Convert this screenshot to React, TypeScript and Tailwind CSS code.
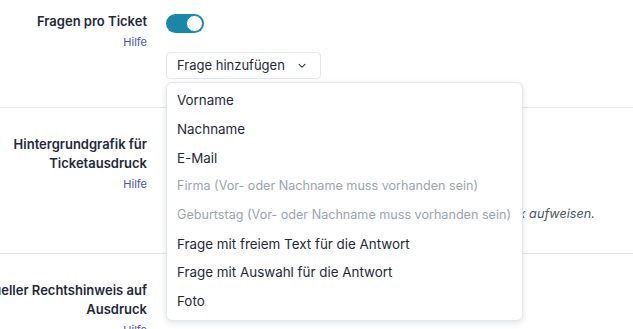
import React from 'react';

const font = { fontFamily: 'Inter, "Noto Sans", sans-serif' };

const Hilfe = () => (
  <div className="mt-[2px] text-[11px] leading-[18px] text-[#4a4fc0]">Hilfe</div>
);

const menuItems = [
  { label: 'Vorname', disabled: false },
  { label: 'Nachname', disabled: false },
  { label: 'E-Mail', disabled: false },
  { label: 'Firma (Vor- oder Nachname muss vorhanden sein)', disabled: true },
  { label: 'Geburtstag (Vor- oder Nachname muss vorhanden sein)', disabled: true },
  { label: 'Frage mit freiem Text für die Antwort', disabled: false },
  { label: 'Frage mit Auswahl für die Antwort', disabled: false },
  { label: 'Foto', disabled: false },
];

export default function App() {
  return (
    <div className="w-[633px] h-[329px] overflow-hidden bg-white text-[13px] text-[#1f2937]" style={font}>
      <div className="ml-[-59px]">
        {/* Fragen pro Ticket */}
        <div className="grid grid-cols-[206px_1fr] gap-x-[19px] pt-3 pb-[28px] border-b border-[#e5e7eb]">
          <div className="text-right">
            <div className="font-semibold leading-[19px] text-[#1e293b]">Fragen pro Ticket</div>
            <Hilfe />
          </div>
          <div className="relative">
            <div className="mt-[2px] w-[38px] h-[19px] rounded-full bg-[#1a87a9] flex items-center justify-end px-[1px]">
              <div className="w-[17px] h-[17px] rounded-full bg-white border border-[#1a87a9]" />
            </div>
            <button className="mt-[19px] h-[27px] pl-[10px] pr-[13px] flex items-center gap-[12px] border border-[#e2e8f0] rounded-[4px] bg-white text-[13px] text-[#1f2937]">
              <span>Frage hinzufügen</span>
              <svg width="10" height="10" viewBox="0 0 24 24" fill="none" stroke="#1f2937" strokeWidth="2.5" strokeLinecap="round" strokeLinejoin="round">
                <path d="M5 8l7 7 7-7" />
              </svg>
            </button>
            <div className="absolute left-0 top-[70px] z-10 w-[357px] rounded-[6px] border border-[#e2e8f0] bg-white shadow-[0_2px_6px_rgba(15,23,42,0.12)] pt-[3px] pb-[4px]">
              {menuItems.map((item) => (
                <div
                  key={item.label}
                  className={`h-[28.7px] flex items-center px-[10px] whitespace-nowrap ${item.disabled ? 'text-[12.6px] text-[#9ca3af]' : 'text-[13.4px] text-[#1f2937]'}`}
                >
                  {item.label}
                </div>
              ))}
            </div>
          </div>
        </div>

        {/* Hintergrundgrafik */}
        <div className="grid grid-cols-[206px_1fr] gap-x-[19px] pt-[27px] pb-[29px] border-b border-[#e5e7eb]">
          <div className="text-right">
            <div className="font-semibold leading-[19px] text-[#1e293b] pl-[60px]">Hintergrundgrafik für Ticketausdruck</div>
            <Hilfe />
          </div>
          <div>
            <div className="h-[60px] flex items-start">
              <button className="h-[26px] px-3 border border-[#e2e8f0] rounded-[4px]">Datei auswählen</button>
            </div>
            <div className="mt-[9px] leading-5 text-[12.7px] italic text-[#4b5563] whitespace-nowrap">
              Die Hintergrundgrafik sollte eine Größe von 2480 x 3508 px aufweisen.
            </div>
          </div>
        </div>

        {/* Rechtshinweis */}
        <div className="grid grid-cols-[206px_1fr] gap-x-[19px] pt-[27px]">
          <div className="text-right">
            <div className="font-semibold leading-[19px] text-[#1e293b]">Individueller Rechtshinweis auf Ausdruck</div>
            <Hilfe />
          </div>
          <div />
        </div>
      </div>
    </div>
  );
}
